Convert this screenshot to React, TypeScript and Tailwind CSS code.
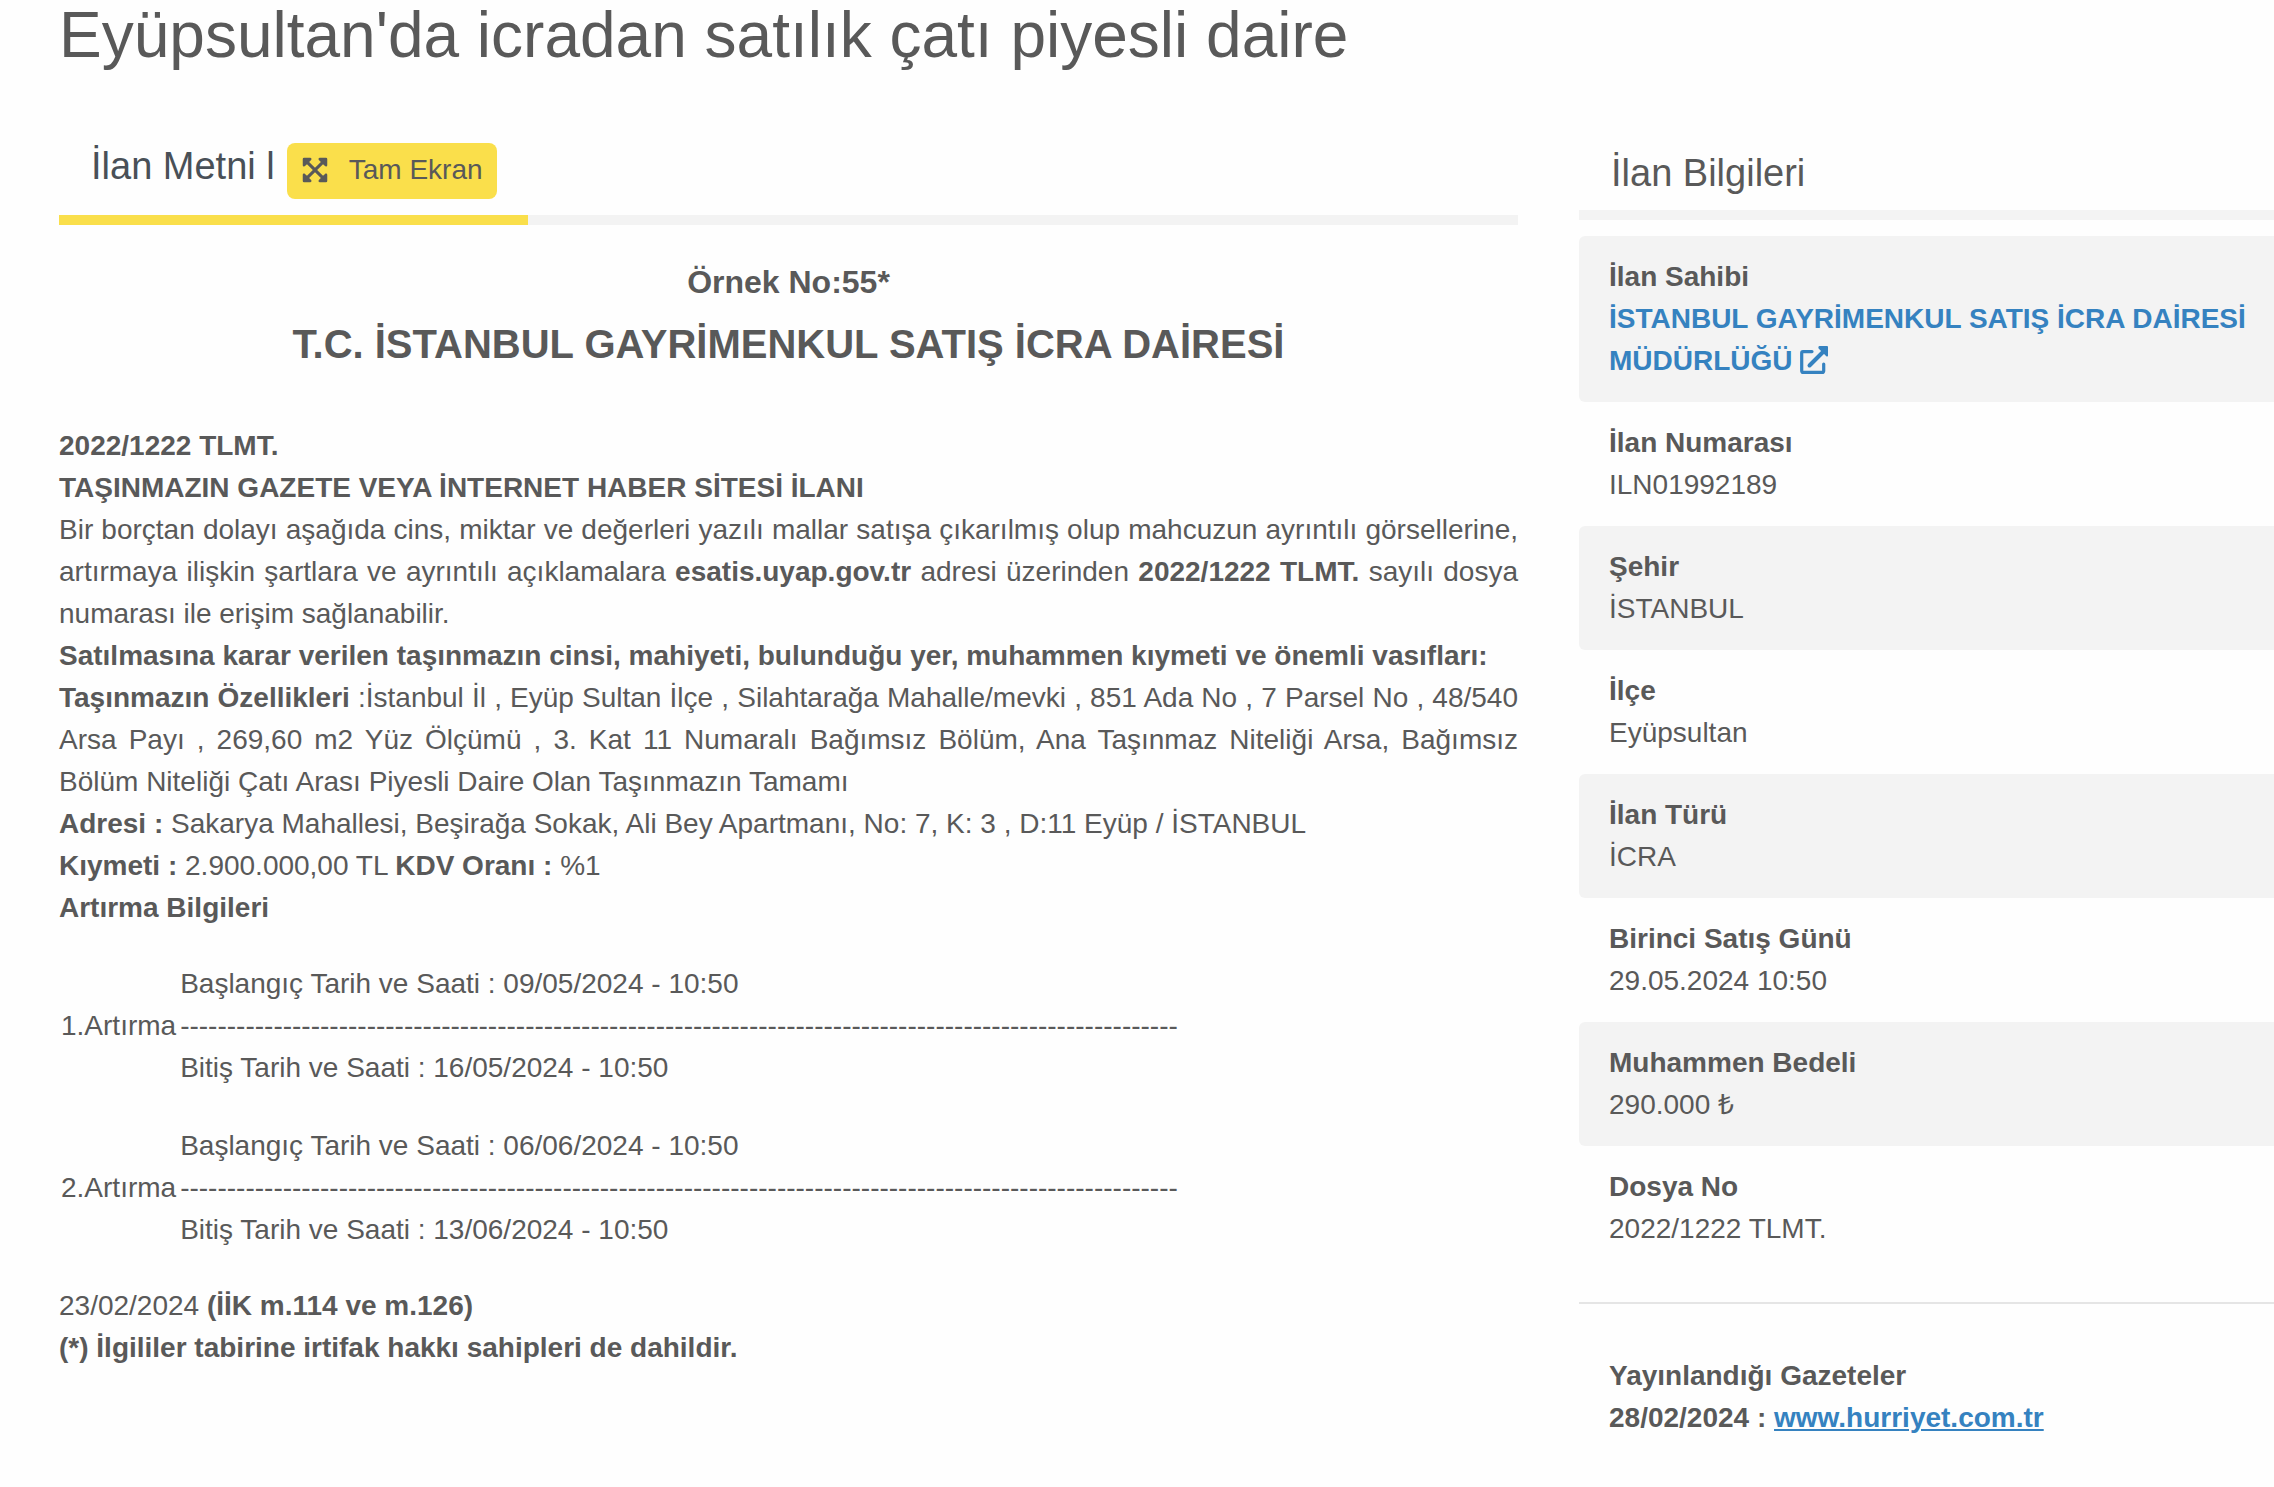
import { FaExpandArrowsAlt } from 'react-icons/fa';

const AUCTIONS = [
  { id: 1, label: '1.Artırma', start: '09/05/2024 - 10:50', end: '16/05/2024 - 10:50' },
  { id: 2, label: '2.Artırma', start: '06/06/2024 - 10:50', end: '13/06/2024 - 10:50' }
];

const DETAILS = [
  { label: 'İlan Numarası', value: 'ILN01992189' },
  { label: 'Şehir', value: 'İSTANBUL' },
  { label: 'İlçe', value: 'Eyüpsultan' },
  { label: 'İlan Türü', value: 'İCRA' },
  { label: 'Birinci Satış Günü', value: '29.05.2024 10:50' },
  { label: 'Muhammen Bedeli', value: '290.000 ₺' },
  { label: 'Dosya No', value: '2022/1222 TLMT.' }
];

function ExternalLinkIcon() {
  return (
    <svg viewBox="0 0 28 28" className="inline-block size-7 align-[-4px]" fill="none" stroke="currentColor" aria-hidden="true">
      <path d="M12 5.6H3a1.3 1.3 0 0 0-1.3 1.3v18.2a1.3 1.3 0 0 0 1.3 1.3h19.4a1.3 1.3 0 0 0 1.3-1.3V18" strokeWidth="3.2" strokeLinecap="round" />
      <path d="M9.5 19.5L23 6" strokeWidth="4" strokeLinecap="round" />
      <path d="M19.5 0H27a1 1 0 0 1 1 1v8.5c0 1-1 1.400-1.700.7l-7.500-7.500C18 1.900 18.400 0 19.500 0z" fill="currentColor" stroke="none" />
    </svg>
  );
}

export default function App() {
  return (
    <div className="min-h-screen overflow-x-hidden bg-[#fefefe] pl-[59px] font-['Liberation_Sans',Arial,sans-serif] text-[28px] leading-[42px] text-[#595959]">
      <h1 className="text-[64px] leading-[70px]">Eyüpsultan'da icradan satılık çatı piyesli daire</h1>

      <div className="mt-[73px] flex items-start gap-[61px]">
        <main className="min-w-0 flex-[1459]">
          {/* Tab bar */}
          <div className="flex border-b-10 border-[#f3f3f3]">
            <div className="-mb-[10px] flex w-[469px] items-start gap-3 border-b-10 border-[#fadf4b] pb-4 pl-8">
              <h2 className="text-[38px] leading-[46px] text-[#495057]">İlan Metni l</h2>
              <button className="flex h-14 items-center rounded-lg bg-[#fadf4b] px-[14px] pb-[2px] text-[#595959]">
                <FaExpandArrowsAlt className="mr-5 size-7" />
                Tam Ekran
              </button>
            </div>
          </div>

          {/* Notice text */}
          <div className="mt-[33px] text-center font-bold">
            <p className="text-[32px] leading-[48px]">Örnek No:55*</p>
            <h3 className="mt-2 text-[40px] leading-[60px]">T.C. İSTANBUL GAYRİMENKUL SATIŞ İCRA DAİRESİ</h3>
          </div>
          <div className="mt-[51px] text-justify">
            <p className="font-bold">2022/1222 TLMT.</p>
            <p className="font-bold">TAŞINMAZIN GAZETE VEYA İNTERNET HABER SİTESİ İLANI</p>
            <p>
              Bir borçtan dolayı aşağıda cins, miktar ve değerleri yazılı mallar satışa çıkarılmış olup mahcuzun ayrıntılı görsellerine, artırmaya ilişkin şartlara ve ayrıntılı açıklamalara <b>esatis.uyap.gov.tr</b> adresi üzerinden <b>2022/1222 TLMT.</b> sayılı dosya numarası ile erişim sağlanabilir.
            </p>
            <p className="font-bold">Satılmasına karar verilen taşınmazın cinsi, mahiyeti, bulunduğu yer, muhammen kıymeti ve önemli vasıfları:</p>
            <p>
              <b>Taşınmazın Özellikleri</b> :İstanbul İl , Eyüp Sultan İlçe , Silahtarağa Mahalle/mevki , 851 Ada No , 7 Parsel No , 48/540 Arsa Payı , 269,60 m2 Yüz Ölçümü , 3. Kat 11 Numaralı Bağımsız Bölüm, Ana Taşınmaz Niteliği Arsa, Bağımsız Bölüm Niteliği Çatı Arası Piyesli Daire Olan Taşınmazın Tamamı
            </p>
            <p><b>Adresi :</b> Sakarya Mahallesi, Beşirağa Sokak, Ali Bey Apartmanı, No: 7, K: 3 , D:11 Eyüp / İSTANBUL</p>
            <p><b>Kıymeti :</b> 2.900.000,00 TL <b>KDV Oranı :</b> %1</p>
            <p className="font-bold">Artırma Bilgileri</p>
          </div>

          {/* Auction dates */}
          <table className="my-4 border-separate border-spacing-x-[2px]">
            <tbody>
              {AUCTIONS.map(auction => (
                <tr key={auction.id}>
                  <td className="pr-[2px]">{auction.label}</td>
                  <td className="py-[18px]">
                    <p>Başlangıç Tarih ve Saati : {auction.start}</p>
                    <p className="whitespace-nowrap">{'-'.repeat(107)}</p>
                    <p>Bitiş Tarih ve Saati : {auction.end}</p>
                  </td>
                </tr>
              ))}
            </tbody>
          </table>

          <p>23/02/2024 <b>(İİK m.114 ve m.126)</b></p>
          <p className="font-bold">(*) İlgililer tabirine irtifak hakkı sahipleri de dahildir.</p>
        </main>

        {/* Sidebar */}
        <aside className="min-w-0 flex-[695]">
          <h2 className="border-b-10 border-[#f3f3f3] pt-[7px] pb-[14px] pl-8 text-[38px] leading-[46px]">İlan Bilgileri</h2>
          <dl className="mt-4">
            <div className="rounded-l-md bg-[#f3f3f3] py-5 pl-[30px] pr-5">
              <dt className="font-bold">İlan Sahibi</dt>
              <dd className="font-bold text-[#3582c0]">
                <a href="#">İSTANBUL GAYRİMENKUL SATIŞ İCRA DAİRESİ MÜDÜRLÜĞÜ <ExternalLinkIcon /></a>
              </dd>
            </div>
            {DETAILS.map(detail => (
              <div key={detail.label} className="rounded-l-md px-[30px] py-5 even:bg-transparent odd:bg-[#f3f3f3]">
                <dt className="font-bold">{detail.label}</dt>
                <dd>{detail.value}</dd>
              </div>
            ))}
          </dl>
          <div className="mt-8 border-t-2 border-[#e5e5e5] px-[30px] pt-[51px] font-bold">
            <p>Yayınlandığı Gazeteler</p>
            <p>28/02/2024 : <a href="#" className="text-[#3582c0] underline">www.hurriyet.com.tr</a></p>
          </div>
        </aside>
      </div>
    </div>
  );
}
